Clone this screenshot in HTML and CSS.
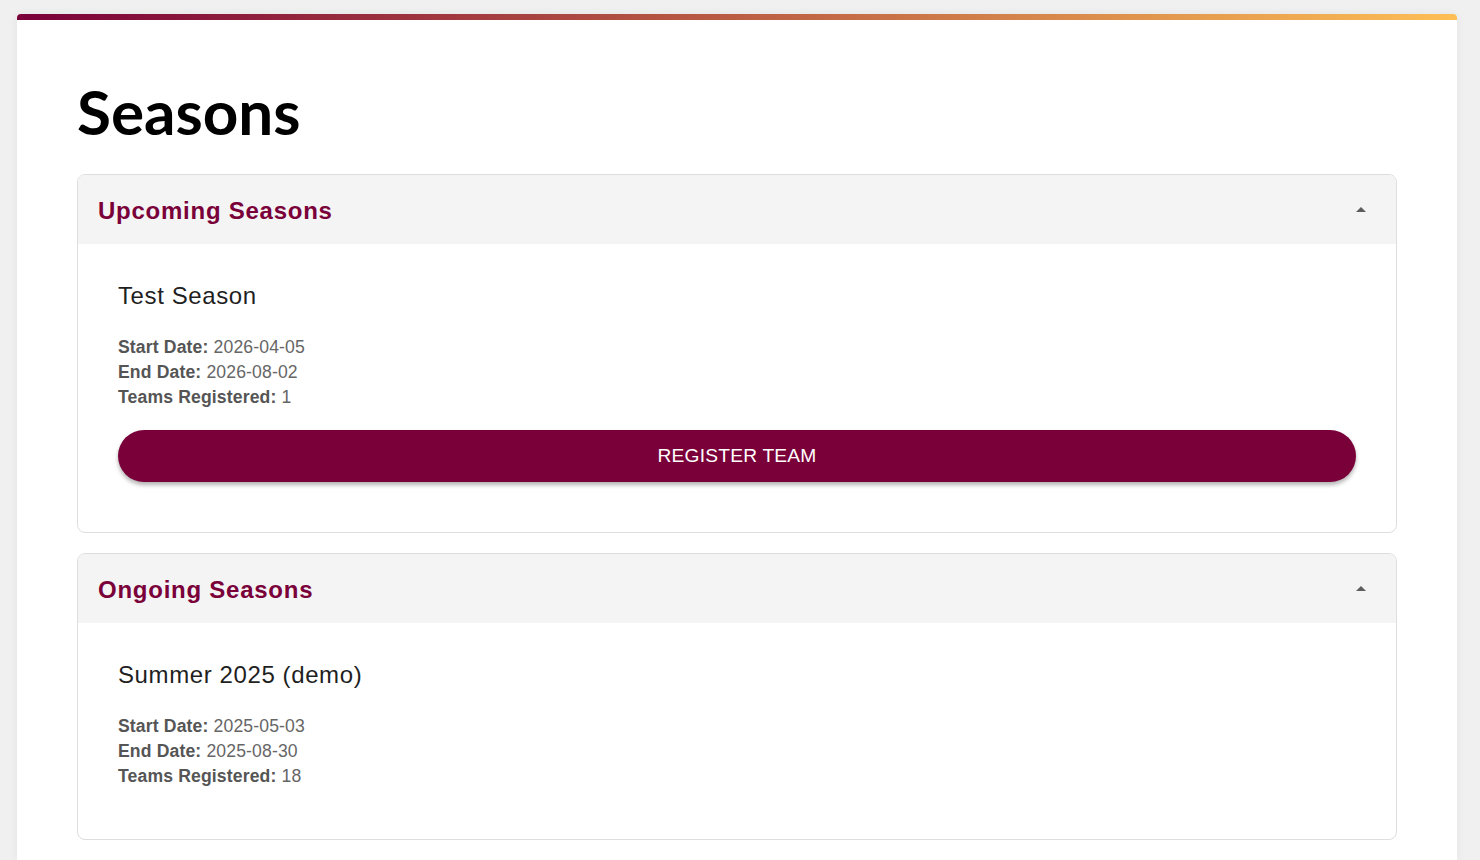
FILE: index.html
```html
<!DOCTYPE html>
<html lang="en">
<head>
<meta charset="utf-8">
<title>Seasons</title>
<link rel="stylesheet" href="styles.css">
</head>
<body>
<main class="page">
  <div class="accent-bar"></div>
  <div class="content">
    <h1 class="page-title">Seasons</h1>

    <section class="accordion">
      <header class="accordion-header">
        <h2 class="accordion-title">Upcoming Seasons</h2>
        <svg class="caret" viewBox="0 0 24 24" width="24" height="24" aria-hidden="true"><path d="M7 14l5-5 5 5z"/></svg>
      </header>
      <div class="accordion-body">
        <article class="season-card">
          <h3 class="season-name">Test Season</h3>
          <p class="season-details">
            <span class="row"><strong>Start Date:</strong> 2026-04-05</span>
            <span class="row"><strong>End Date:</strong> 2026-08-02</span>
            <span class="row"><strong>Teams Registered:</strong> 1</span>
          </p>
          <button class="register-btn" type="button">REGISTER TEAM</button>
        </article>
      </div>
    </section>

    <section class="accordion">
      <header class="accordion-header">
        <h2 class="accordion-title">Ongoing Seasons</h2>
        <svg class="caret" viewBox="0 0 24 24" width="24" height="24" aria-hidden="true"><path d="M7 14l5-5 5 5z"/></svg>
      </header>
      <div class="accordion-body">
        <article class="season-card">
          <h3 class="season-name">Summer 2025 (demo)</h3>
          <p class="season-details">
            <span class="row"><strong>Start Date:</strong> 2025-05-03</span>
            <span class="row"><strong>End Date:</strong> 2025-08-30</span>
            <span class="row"><strong>Teams Registered:</strong> 18</span>
          </p>
        </article>
      </div>
    </section>
  </div>
</main>
</body>
</html>
```

FILE: styles.css
```css
* { box-sizing: border-box; }

html, body {
  margin: 0;
  padding: 0;
  background: #f0f0f0;
  font-family: "Liberation Sans", Arial, sans-serif;
  overflow: hidden;
}

body {
  padding: 14px 23px 0 17px;
}

.page {
  background: #ffffff;
  border-radius: 4px 4px 0 0;
  box-shadow: 0 0 10px rgba(0, 0, 0, 0.06);
  min-height: 846px;
}

.accent-bar {
  height: 6px;
  border-radius: 4px 4px 0 0;
  background: linear-gradient(90deg, #7a0039 0%, #bb5d43 50%, #fdbf55 100%);
}

.content {
  padding: 54px 60px 0 60px;
}

.page-title {
  margin: 0 0 26px 0;
  font-family: Lato, "Open Sans", sans-serif;
  font-weight: 700;
  font-size: 62px;
  line-height: 1.2;
  color: #000;
}

.accordion {
  border: 1px solid #dedede;
  border-radius: 8px;
  overflow: hidden;
  margin-bottom: 20px;
  background: #fff;
}

.accordion-header {
  height: 69px;
  background: #f4f4f4;
  display: flex;
  align-items: center;
  justify-content: space-between;
  padding: 3px 23px 0 20px;
}

.accordion-title {
  margin: 0;
  font-size: 24px;
  font-weight: 700;
  color: #7a0039;
  letter-spacing: 0.75px;
}

.caret {
  fill: rgba(0, 0, 0, 0.62);
  display: block;
  margin-top: -2px;
}

.accordion-body {
  padding: 11px 20px 21px 20px;
}

.season-card {
  background: #fff;
  border-radius: 4px;
  padding: 27px 20px 29px 20px;
}

.season-name {
  margin: 0 0 24px 0;
  font-size: 24px;
  font-weight: 400;
  line-height: 1.2;
  color: #1f1f1f;
  letter-spacing: 0.6px;
}

.season-details {
  margin: 0;
  font-size: 17.6px;
  line-height: 25px;
  color: #666;
  letter-spacing: 0.14px;
}

.season-details .row {
  display: block;
}

.season-details strong {
  color: #555;
  font-weight: 700;
}

.register-btn {
  display: block;
  width: 100%;
  height: 52px;
  margin-top: 20px;
  border: none;
  border-radius: 26px;
  background: #7a0039;
  color: #fff;
  font-family: "Liberation Sans", Arial, sans-serif;
  font-size: 19.2px;
  letter-spacing: 0.2px;
  box-shadow: 0 3px 4px rgba(0, 0, 0, 0.3);
  cursor: pointer;
}
```
